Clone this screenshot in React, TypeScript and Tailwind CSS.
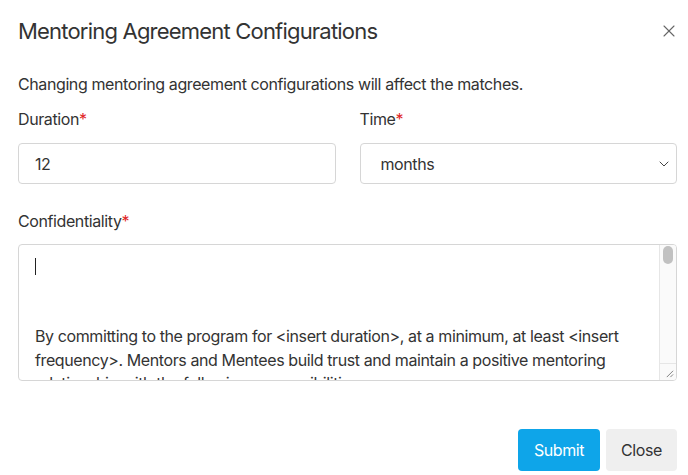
import { ChevronDown, X } from "lucide-react";

const bodyText =
  "By committing to the program for <insert duration>, at a minimum, at least <insert frequency>. Mentors and Mentees build trust and maintain a positive mentoring relationship with the following responsibilities:";

function Label({ children }: { children: string }) {
  return (
    <label className="block text-base leading-6 text-[#333]">
      {children}
      <span className="text-[#e02424]">*</span>
    </label>
  );
}

export default function App() {
  return (
    <div className="h-[475px] w-[688px] bg-white font-['Inter',sans-serif] tracking-[-0.4px] text-[#333]">
      <div className="pl-[18px] pr-[11px]">
        <header className="flex h-[62px] items-center justify-between">
          <h1 className="text-[22px] font-normal tracking-[-0.8px] text-[#333]">
            Mentoring Agreement Configurations
          </h1>
          <button className="-mr-[2px] text-[#666]">
            <X size={20} strokeWidth={1.3} />
          </button>
        </header>

        <p className="mt-[10px] text-base leading-6">
          Changing mentoring agreement configurations will affect the matches.
        </p>

        <div className="mt-[11px] grid grid-cols-2 gap-6">
          <div>
            <Label>Duration</Label>
            <input
              defaultValue="12"
              className="mt-[12px] h-[41px] w-full rounded border border-[#d6d6d6] px-4 text-base text-[#333] outline-none"
            />
          </div>
          <div>
            <Label>Time</Label>
            <div className="mt-[12px] flex h-[41px] w-full items-center justify-between rounded border border-[#d6d6d6] pl-5 pr-[4px]">
              <span className="text-base">months</span>
              <ChevronDown size={16} strokeWidth={1.5} className="text-[#444]" />
            </div>
          </div>
        </div>

        <div className="mt-[25px]">
          <Label>Confidentiality</Label>
          <div className="mt-[11px] flex h-[137px] overflow-hidden rounded border border-[#d6d6d6]">
            <div className="flex-1 overflow-hidden px-4 pt-[10px] text-base leading-[23.5px]">
              <div className="h-[23px]">
                <span className="inline-block h-[17px] w-px translate-y-[3px] bg-[#222]" />
              </div>
              <div className="h-[23px]" />
              <div className="h-[24px]" />
              <p>{bodyText}</p>
            </div>
            <div className="flex w-[17px] flex-col border-l border-[#e6e6e6] bg-[#fafafa]">
              <div className="flex-1 px-[3px] pt-[1px]">
                <div className="h-[18px] rounded-full bg-[#c1c1c1]" />
              </div>
              <div className="relative h-[17px] border-t border-[#e6e6e6]">
                <svg
                  viewBox="0 0 10 10"
                  className="absolute bottom-[2px] right-[2px] h-[9px] w-[9px]"
                >
                  <path d="M9 2 L2 9 M9 6 L6 9" stroke="#777" strokeWidth="1" />
                </svg>
              </div>
            </div>
          </div>
        </div>

        <div className="mt-[48px] flex justify-end gap-[6px]">
          <button className="h-[42px] w-[82px] rounded bg-[#0ea5e9] text-base text-white">
            Submit
          </button>
          <button className="h-[42px] w-[71px] rounded bg-[#efefef] text-base text-[#333]">
            Close
          </button>
        </div>
      </div>
    </div>
  );
}
